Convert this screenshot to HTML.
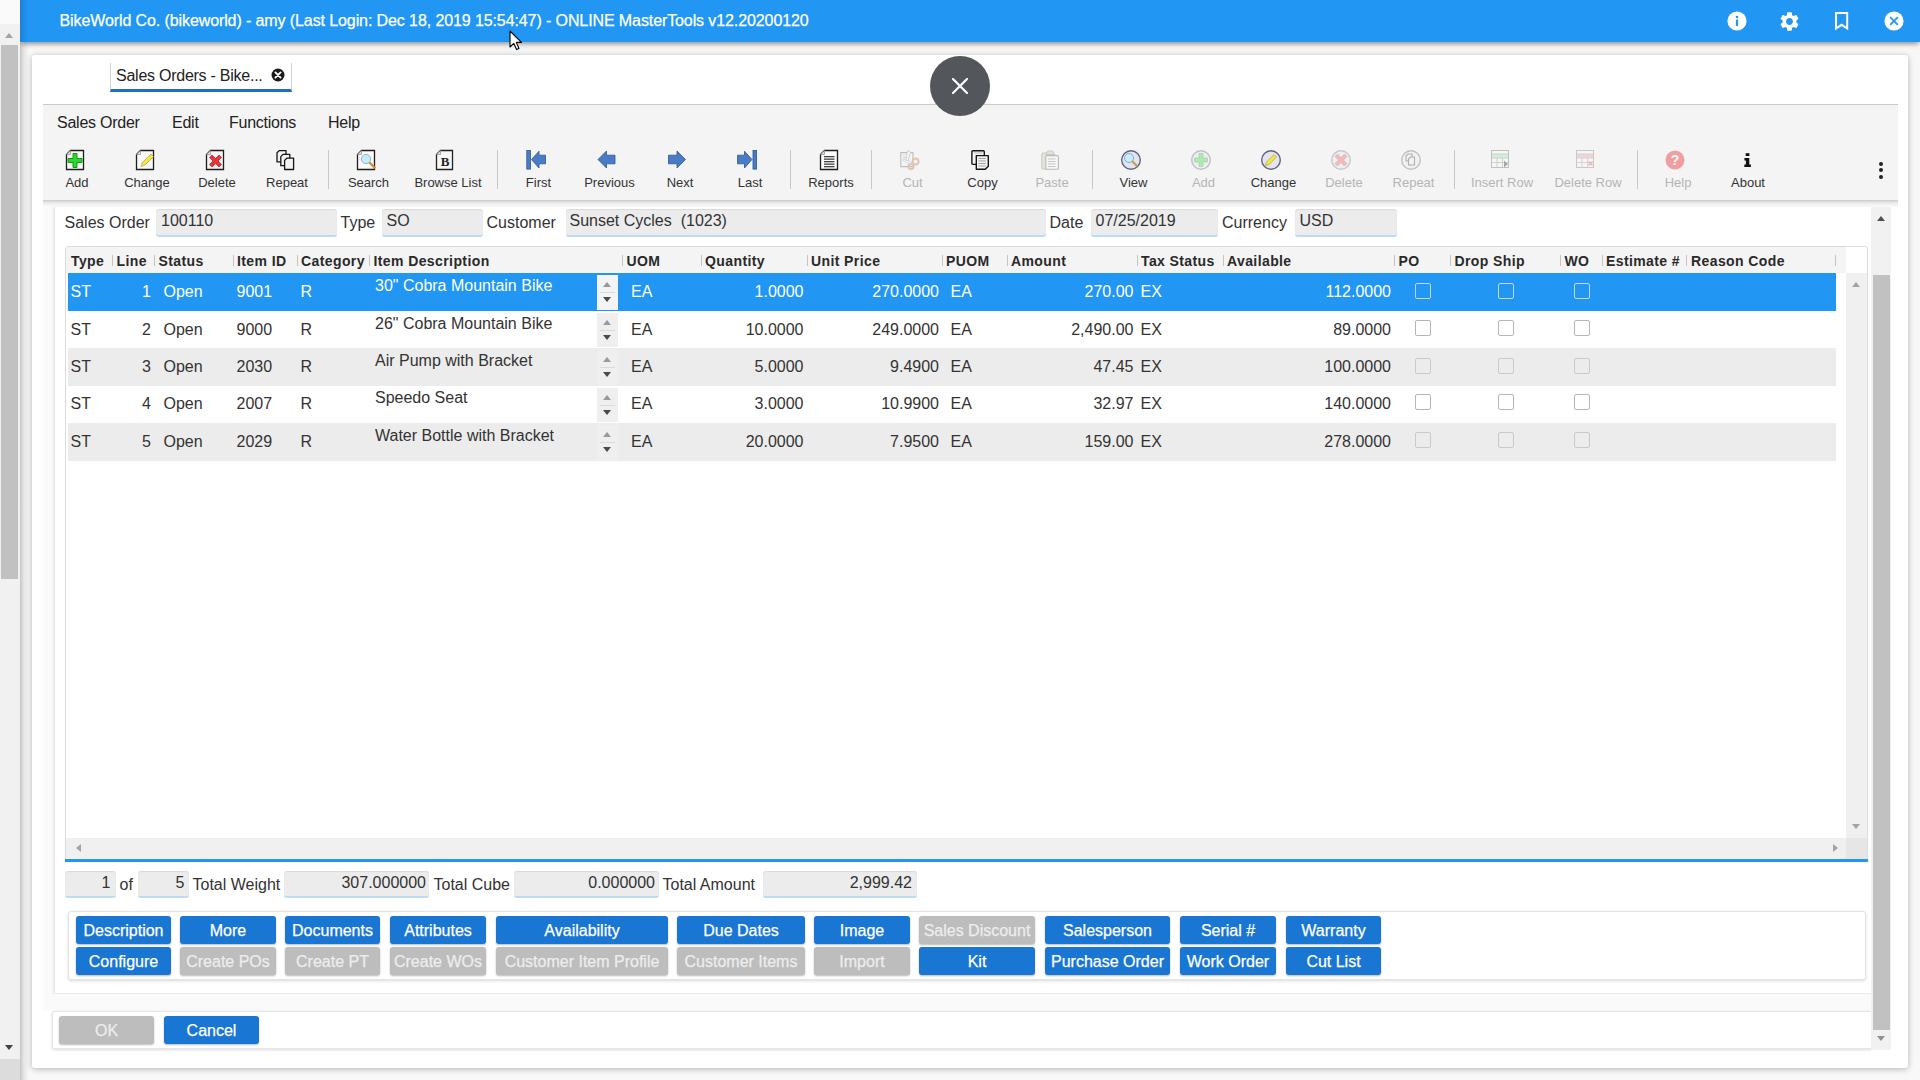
<!DOCTYPE html>
<html><head><meta charset="utf-8"><style>
*{box-sizing:border-box;margin:0;padding:0}
html,body{width:1920px;height:1080px;overflow:hidden}
body{position:relative;background:#f8f8f8;font-family:"Liberation Sans",sans-serif;color:#333}
.a{position:absolute;white-space:nowrap}
svg{position:absolute;overflow:visible}
#lsb{left:0;top:0;width:20px;height:1059px;background:#f1f1f1;z-index:4}
#lsbtop{left:0;top:0;width:20px;height:24px;background:#fafafa;z-index:4}
#lsbcorner{left:0;top:1059px;width:20px;height:21px;background:#dcdcdc;z-index:4}
#lthumb{left:1px;top:45px;width:17px;height:534px;background:#c1c1c1;z-index:5}
.tri-up{width:0;height:0;border-left:4.5px solid transparent;border-right:4.5px solid transparent;border-bottom:5px solid #a3a3a3}
.tri-dn{width:0;height:0;border-left:4.5px solid transparent;border-right:4.5px solid transparent;border-top:5px solid #a3a3a3}
.tri-l{width:0;height:0;border-top:4.5px solid transparent;border-bottom:4.5px solid transparent;border-right:5px solid #a3a3a3}
.tri-r{width:0;height:0;border-top:4.5px solid transparent;border-bottom:4.5px solid transparent;border-left:5px solid #a3a3a3}
#hdr{left:20px;top:0;width:1900px;height:42px;background:linear-gradient(to right,#1d82d6,#2196f3 8px);box-shadow:0 3px 5px -1px rgba(0,0,0,.42);z-index:3}
#title{left:59.5px;top:1px;height:42px;line-height:40px;font-size:16px;letter-spacing:-.1px;color:#fff;z-index:4;-webkit-text-stroke:.25px #fff}
#win{left:32px;top:55px;width:1876px;height:1013px;background:#fff;border-radius:3px;box-shadow:0 1px 6px rgba(0,0,0,.28)}
#tab{left:110px;top:63px;width:182px;height:29px;border:1px solid #cfd3d8;border-top:none;border-bottom:3px solid #1c70c8;background:#fff}
#tabtxt{left:116px;top:63px;height:26px;line-height:26px;font-size:16px;letter-spacing:-.25px;color:#222}
#tbar{left:43px;top:104px;width:1855px;height:96px;background:#f4f4f4;border-top:1px solid #c9c9c9;}
.menu{top:112px;font-size:16px;letter-spacing:-.25px;color:#222;line-height:22px}
.tl{top:175px;width:100px;text-align:center;font-size:13px;color:#333;line-height:16px}
.tl.d{color:#b5b5b5}
.sep{top:150px;width:1px;height:39px;background:#c8c8c8}
#closeov{left:930px;top:56px;width:60px;height:60px;border-radius:50%;background:#53565b;z-index:5}
</style></head><body>
<div class="a" id="lsb"></div><div class="a" id="lsbtop"></div><div class="a" id="lsbcorner"></div>
<div class="a tri-up" style="left:5px;top:33px;z-index:5"></div><div class="a" id="lthumb"></div>
<div class="a tri-dn" style="left:5px;top:1045px;border-top-color:#444;z-index:5"></div>
<div class="a" id="hdr"></div>
<div class="a" id="title">BikeWorld Co. (bikeworld) - amy (Last Login: Dec 18, 2019 15:54:47) - ONLINE MasterTools v12.20200120</div>
<div class="a" style="left:20px;top:42px;width:12px;height:1038px;background:linear-gradient(to right,#c6c6c6,#e4e4e4 30%,#f6f6f6 70%,#fafafa)"></div>
<div class="a" id="win"></div>
<div class="a" id="tab"></div><div class="a" id="tabtxt">Sales Orders - Bike...</div>
<svg style="left:271px;top:68px;z-index:2" width="14" height="14" viewBox="0 0 14 14"><circle cx="7" cy="7" r="6.5" fill="#1a1a1a"/><path d="M4.4 4.4L9.6 9.6M9.6 4.4L4.4 9.6" stroke="#fff" stroke-width="1.9" stroke-linecap="round"/></svg>
<div class="a" id="tbar"></div>
<div class="a menu" style="left:57px">Sales Order</div>
<div class="a menu" style="left:172px">Edit</div>
<div class="a menu" style="left:229px">Functions</div>
<div class="a menu" style="left:328px">Help</div>
<svg style="left:66px;top:150px" width="20" height="20" viewBox="0 0 20 20"><path d="M4.5 .5H17.5V19.5H.5V4.5Z" fill="#fafafa" stroke="#1e1e1e" stroke-width="1.3" stroke-linejoin="miter"/><path d="M.5 4.5H4.5V.5" fill="#ddd" stroke="#999" stroke-width=".8"/><path d="M7 3.5h4v5h5v4h-5v5H7v-5H2v-4h5z" fill="#2fd62f" stroke="#149a14" stroke-width="1"/></svg>
<div class="a tl" style="left:27px">Add</div>
<svg style="left:136px;top:150px" width="20" height="20" viewBox="0 0 20 20"><path d="M4.5 .5H17.5V19.5H.5V4.5Z" fill="#fafafa" stroke="#1e1e1e" stroke-width="1.3" stroke-linejoin="miter"/><path d="M.5 4.5H4.5V.5" fill="#ddd" stroke="#999" stroke-width=".8"/><path d="M5 16.5l1-3.5 9-9 2.5 2.5-9 9z" fill="#f2e64a" stroke="#b9a92a" stroke-width=".8"/><path d="M5 16.5l1-3.5 2.5 2.5z" fill="#d8cf8a"/></svg>
<div class="a tl" style="left:97px">Change</div>
<svg style="left:206px;top:150px" width="20" height="20" viewBox="0 0 20 20"><path d="M4.5 .5H17.5V19.5H.5V4.5Z" fill="#f4f4f4" stroke="#1e1e1e" stroke-width="1.3" stroke-linejoin="miter"/><path d="M.5 4.5H4.5V.5" fill="#ddd" stroke="#999" stroke-width=".8"/><path d="M3.5 5.5l2.5-2.5 3.5 3.5 3.5-3.5 2.5 2.5-3.5 3.5 3.5 3.5-2.5 2.5-3.5-3.5-3.5 3.5-2.5-2.5 3.5-3.5z" transform="translate(0,2)" fill="#e8333a" stroke="#b11d22" stroke-width=".7"/></svg>
<div class="a tl" style="left:167px">Delete</div>
<svg style="left:276px;top:150px" width="20" height="20" viewBox="0 0 20 20"><path d="M3.2 0.6H10V11.9H1V2.8000000000000003Z" fill="#f2f2f2" stroke="#151515" stroke-width="1.3" stroke-linejoin="round"/><path d="M7.0 4.4H13.8V15.700000000000001H4.8V6.6000000000000005Z" fill="#f2f2f2" stroke="#151515" stroke-width="1.3" stroke-linejoin="round"/><path d="M10.8 8.2H17.6V19.5H8.6V10.399999999999999Z" fill="#f2f2f2" stroke="#151515" stroke-width="1.3" stroke-linejoin="round"/></svg>
<div class="a tl" style="left:237px">Repeat</div>
<svg style="left:357px;top:150px" width="20" height="20" viewBox="0 0 20 20"><path d="M4.5 .5H17.5V19.5H.5V4.5Z" fill="#fafafa" stroke="#1e1e1e" stroke-width="1.3" stroke-linejoin="miter"/><path d="M.5 4.5H4.5V.5" fill="#ddd" stroke="#999" stroke-width=".8"/><path d="M12 12l5.5 5.5" stroke="#d98b25" stroke-width="2.4" stroke-linecap="round"/><circle cx="9" cy="9" r="4.6" fill="#c9ecfb" stroke="#8ab7cc" stroke-width="1"/></svg>
<div class="a tl" style="left:318.5px">Search</div>
<svg style="left:436px;top:150px" width="20" height="20" viewBox="0 0 20 20"><path d="M4.5 .5H16.5V19.5H.5V4.5Z" fill="#f7f7f7" stroke="#222" stroke-width="1.3"/><path d="M.5 4.5H4.5V.5" fill="#ddd" stroke="#999" stroke-width=".8"/><text x="9" y="15.5" font-family="Liberation Serif" font-weight="bold" font-size="13" text-anchor="middle" fill="#222">B</text></svg>
<div class="a tl" style="left:398px">Browse List</div>
<svg style="left:526px;top:150px" width="20" height="20" viewBox="0 0 20 20"><rect x=".8" y=".5" width="3.6" height="18.6" fill="#4a7cc6" stroke="#2b5597" stroke-width=".8"/><path d="M5.5 9.5L13 1.2V5.2H19.5V13.8H13V18z" fill="#4a7cc6" stroke="#2b5597" stroke-width=".8"/></svg>
<div class="a tl" style="left:488.5px">First</div>
<svg style="left:597px;top:150px" width="20" height="20" viewBox="0 0 20 20"><path d="M1 9.5L9.5 1V5.2H18V13.8H9.5V18z" fill="#4a7cc6" stroke="#2b5597" stroke-width=".8"/></svg>
<div class="a tl" style="left:559.5px">Previous</div>
<svg style="left:667px;top:150px" width="20" height="20" viewBox="0 0 20 20"><path d="M18.5 9.5L10 1V5.2H1.5V13.8H10V18z" fill="#4a7cc6" stroke="#2b5597" stroke-width=".8"/></svg>
<div class="a tl" style="left:630px">Next</div>
<svg style="left:737px;top:150px" width="20" height="20" viewBox="0 0 20 20"><rect x="16" y=".5" width="3.6" height="18.6" fill="#4a7cc6" stroke="#2b5597" stroke-width=".8"/><path d="M15 9.5L7.5 1.2V5.2H.5V13.8H7.5V18z" fill="#4a7cc6" stroke="#2b5597" stroke-width=".8"/></svg>
<div class="a tl" style="left:700px">Last</div>
<svg style="left:820px;top:150px" width="20" height="20" viewBox="0 0 20 20"><path d="M4.5 .5H17.5V19.5H.5V4.5Z" fill="#fafafa" stroke="#1e1e1e" stroke-width="1.3" stroke-linejoin="miter"/><path d="M.5 4.5H4.5V.5" fill="#ddd" stroke="#999" stroke-width=".8"/><rect x="4" y="6" width="10.5" height="1.3" fill="#444"/><rect x="4" y="8.5" width="10.5" height="1.3" fill="#444"/><rect x="4" y="11" width="10.5" height="1.3" fill="#444"/><rect x="4" y="13.5" width="10.5" height="1.3" fill="#444"/><rect x="4" y="16" width="10.5" height="1.3" fill="#444"/></svg>
<div class="a tl" style="left:781px">Reports</div>
<svg style="left:900px;top:150px" width="20" height="20" viewBox="0 0 20 20"><g opacity=".5"><path d="M.8 2.6H13V16.6H.8Z" fill="#f4f4f4" stroke="#8a8a8a" stroke-width="1.1"/><path d="M3 5l2.5 0M3 7.5h3" stroke="#aaa" stroke-width=".8"/><path d="M7.5 0.8L10.5 2 8 11 6 10Z" fill="#fff" stroke="#999" stroke-width=".8"/><path d="M3 9l10 4-1 2-9-4.5z" fill="#fff" stroke="#aaa" stroke-width=".7"/><circle cx="15.5" cy="11.5" r="3" fill="none" stroke="#c99a7a" stroke-width="2"/><circle cx="11" cy="16.5" r="2.6" fill="none" stroke="#c99a7a" stroke-width="2"/></g></svg>
<div class="a tl d" style="left:862.5px">Cut</div>
<svg style="left:971px;top:150px" width="20" height="20" viewBox="0 0 20 20"><rect x=".9" y=".8" width="12.4" height="13.6" rx="1" fill="#f6f6f6" stroke="#141414" stroke-width="1.4"/><path d="M3 3h8.5" stroke="#aaa" stroke-width=".8"/><path d="M5.3 5.6H17.3V16.2L14.2 19.2H5.3Z" fill="#f6f6f6" stroke="#141414" stroke-width="1.4" stroke-linejoin="round"/><rect x="7.3" y="8" width="7.5" height=".9" fill="#9a9a9a"/><rect x="7.3" y="10.5" width="7.5" height=".9" fill="#9a9a9a"/><rect x="7.3" y="13" width="7.5" height=".9" fill="#9a9a9a"/><rect x="7.3" y="15.5" width="7.5" height=".9" fill="#9a9a9a"/></svg>
<div class="a tl" style="left:932.5px">Copy</div>
<svg style="left:1041px;top:150px" width="20" height="20" viewBox="0 0 20 20"><g opacity=".45"><rect x=".8" y="3" width="12.5" height="16" rx="1.2" fill="#d6cfc2" stroke="#9a9080" stroke-width="1"/><path d="M5 4.5L6.5 1H11.5L13.5 4.5Z" fill="#c8c8c8" stroke="#888" stroke-width=".8"/><rect x="4.8" y="5.6" width="12.6" height="13.6" rx="1" fill="#fafafa" stroke="#777" stroke-width="1.1"/><rect x="7" y="8.5" width="7.5" height=".9" fill="#888"/><rect x="7" y="11" width="7.5" height=".9" fill="#888"/><rect x="7" y="13.5" width="7.5" height=".9" fill="#888"/><rect x="7" y="16" width="7.5" height=".9" fill="#888"/></g></svg>
<div class="a tl d" style="left:1002px">Paste</div>
<svg style="left:1121px;top:150px" width="20" height="20" viewBox="0 0 20 20"><g opacity="1"><circle cx="10" cy="10" r="9.3" fill="#e4e4f0" stroke="#62647e" stroke-width="1.4"/><path d="M10.5 10.5l5 5" stroke="#c8a04a" stroke-width="2.3" stroke-linecap="round"/><circle cx="8" cy="8" r="4.5" fill="#c9ecfb" stroke="#7fb0cc" stroke-width="1"/></g></svg>
<div class="a tl" style="left:1083.5px">View</div>
<svg style="left:1191px;top:150px" width="20" height="20" viewBox="0 0 20 20"><g opacity="0.35"><circle cx="10" cy="10" r="9.3" fill="#e4e4f0" stroke="#62647e" stroke-width="1.4"/><path d="M8 3.5h4v4.5h4.5v4H12v4.5H8V12H3.5V8H8z" fill="#33d433" stroke="#1a9a1a" stroke-width=".8"/></g></svg>
<div class="a tl d" style="left:1153.5px">Add</div>
<svg style="left:1261px;top:150px" width="20" height="20" viewBox="0 0 20 20"><g opacity="1"><circle cx="10" cy="10" r="9.3" fill="#e4e4f0" stroke="#62647e" stroke-width="1.4"/><path d="M4.5 15.5l1-3.5 7.5-7.5 2.5 2.5-7.5 7.5z" fill="#f2e64a" stroke="#b9a92a" stroke-width=".8"/></g></svg>
<div class="a tl" style="left:1223.5px">Change</div>
<svg style="left:1331px;top:150px" width="20" height="20" viewBox="0 0 20 20"><g opacity="0.3"><circle cx="10" cy="10" r="9.3" fill="#e4e4f0" stroke="#62647e" stroke-width="1.4"/><path d="M4 6.5l2.5-2.5 3.5 3.5 3.5-3.5 2.5 2.5-3.5 3.5 3.5 3.5-2.5 2.5-3.5-3.5-3.5 3.5-2.5-2.5 3.5-3.5z" fill="#e8333a" stroke="#b11d22" stroke-width=".7"/></g></svg>
<div class="a tl d" style="left:1294px">Delete</div>
<svg style="left:1401px;top:150px" width="20" height="20" viewBox="0 0 20 20"><g opacity="0.35"><circle cx="10" cy="10" r="9.3" fill="#eee" stroke="#666" stroke-width="1.4"/><path d="M7.0 4.0H11.0V11.0H5.0V6.0Z" fill="#efefef" stroke="#333" stroke-width="1.1"/><path d="M9.5 7.0H13.5V15.0H7.5V9.0Z" fill="#efefef" stroke="#333" stroke-width="1.1"/></g></svg>
<div class="a tl d" style="left:1363.5px">Repeat</div>
<svg style="left:1491px;top:150px" width="20" height="20" viewBox="0 0 20 20"><g opacity=".4"><rect x=".5" y=".5" width="17" height="17" fill="#f8f8f8" stroke="#777" stroke-width="1"/><rect x="1" y="4" width="16" height="4" fill="#a6e8a6"/><path d="M.5 4h17M.5 8h17M.5 12.5h17M6 8v9.5M11.5 8v9.5" stroke="#888" stroke-width=".8"/><path d="M13 10.5l4 3.5-4 3.5z" fill="#333"/></g></svg>
<div class="a tl d" style="left:1452px">Insert Row</div>
<svg style="left:1576px;top:150px" width="20" height="20" viewBox="0 0 20 20"><g opacity=".35"><rect x=".5" y=".5" width="17" height="17" fill="#f8f8f8" stroke="#777" stroke-width="1"/><rect x="1" y="4" width="16" height="4" fill="#f29a9a"/><path d="M.5 4h17M.5 8h17M.5 12.5h17M6 8v9.5M11.5 8v9.5" stroke="#888" stroke-width=".8"/><path d="M12.5 11.5l4 4M16.5 11.5l-4 4" stroke="#e33" stroke-width="1.3"/></g></svg>
<div class="a tl d" style="left:1538px">Delete Row</div>
<svg style="left:1665px;top:150px" width="20" height="20" viewBox="0 0 20 20"><g opacity=".45"><circle cx="10" cy="10" r="9.5" fill="#ea3a3a"/><text x="10" y="15" font-family="Liberation Sans" font-weight="bold" font-size="14" text-anchor="middle" fill="#fff">?</text></g></svg>
<div class="a tl d" style="left:1628px">Help</div>
<svg style="left:1737px;top:150px" width="20" height="20" viewBox="0 0 20 20"><rect x="8.7" y="3.2" width="3.7" height="2.8" fill="#111"/><path d="M7.4 8.1H12.3V14.4H13.9V16.9H7.3V14.4H8.9V10.4H7.4Z" fill="#111"/></svg>
<div class="a tl" style="left:1698px">About</div>
<div class="a sep" style="left:328px"></div>
<div class="a sep" style="left:497px"></div>
<div class="a sep" style="left:790px"></div>
<div class="a sep" style="left:871px"></div>
<div class="a sep" style="left:1092px"></div>
<div class="a sep" style="left:1454px"></div>
<div class="a sep" style="left:1637px"></div>
<div class="a" style="left:1879px;top:161.5px;width:4px;height:4px;border-radius:50%;background:#222"></div>
<div class="a" style="left:1879px;top:168px;width:4px;height:4px;border-radius:50%;background:#222"></div>
<div class="a" style="left:1879px;top:174.5px;width:4px;height:4px;border-radius:50%;background:#222"></div>
<div class="a" style="left:43px;top:200px;width:1855px;height:7px;background:linear-gradient(#c9c9c9,#e6e6e6 35%,#f6f6f6 75%,#fafafa)"></div>
<div class="a" style="left:43px;top:207px;width:11px;height:787px;background:#fafafa"></div>
<div class="a" style="left:54px;top:207px;width:1818px;height:787px;background:#fff;border:1px solid #e8e8e8;border-top:none;box-shadow:0 1px 3px rgba(0,0,0,.12)"></div>
<div class="a" style="left:43px;top:994px;width:1829px;height:17px;background:#fafafa"></div>
<div class="a" style="left:52px;top:1011px;width:1820px;height:38px;background:#fff;border:1px solid #e6e6e6;border-radius:2px;box-shadow:0 1px 3px rgba(0,0,0,.15)"></div>
<div class="a" style="left:1871px;top:207px;width:20px;height:843px;background:#f1f1f1"></div>
<div class="a" style="left:1873px;top:275px;width:17px;height:755px;background:#c1c1c1"></div>
<div class="a tri-up" style="left:1877px;top:216px;border-bottom-color:#505050"></div>
<div class="a tri-dn" style="left:1877px;top:1036px;border-top-color:#909090"></div>
<div class="a" style="top:212.76px;font-size:16px;line-height:20px;color:#333;left:64.50px;">Sales Order</div>
<div class="a" style="left:156px;top:209px;width:181px;height:27.5px;background:#ececec;border-radius:3px;border-bottom:2.5px solid #bedbf3;box-shadow:inset 0 1px 1px rgba(0,0,0,.08)"></div>
<div class="a" style="top:211.26px;font-size:16px;line-height:20px;color:#333;left:161.00px;">100110</div>
<div class="a" style="top:212.76px;font-size:16px;line-height:20px;color:#333;left:340.50px;">Type</div>
<div class="a" style="left:382px;top:209px;width:101px;height:27.5px;background:#ececec;border-radius:3px;border-bottom:2.5px solid #bedbf3;box-shadow:inset 0 1px 1px rgba(0,0,0,.08)"></div>
<div class="a" style="top:211.26px;font-size:16px;line-height:20px;color:#333;left:386.50px;">SO</div>
<div class="a" style="top:212.76px;font-size:16px;line-height:20px;color:#333;left:486.50px;">Customer</div>
<div class="a" style="left:566px;top:209px;width:480px;height:27.5px;background:#ececec;border-radius:3px;border-bottom:2.5px solid #bedbf3;box-shadow:inset 0 1px 1px rgba(0,0,0,.08)"></div>
<div class="a" style="top:211.26px;font-size:16px;line-height:20px;color:#333;left:569.50px;">Sunset Cycles&nbsp; (1023)</div>
<div class="a" style="top:212.76px;font-size:16px;line-height:20px;color:#333;left:1049.50px;">Date</div>
<div class="a" style="left:1091px;top:209px;width:127px;height:27.5px;background:#ececec;border-radius:3px;border-bottom:2.5px solid #bedbf3;box-shadow:inset 0 1px 1px rgba(0,0,0,.08)"></div>
<div class="a" style="top:211.26px;font-size:16px;line-height:20px;color:#333;left:1095.50px;">07/25/2019</div>
<div class="a" style="top:212.76px;font-size:16px;line-height:20px;color:#333;left:1222.00px;">Currency</div>
<div class="a" style="left:1295px;top:209px;width:102px;height:27.5px;background:#ececec;border-radius:3px;border-bottom:2.5px solid #bedbf3;box-shadow:inset 0 1px 1px rgba(0,0,0,.08)"></div>
<div class="a" style="top:211.26px;font-size:16px;line-height:20px;color:#333;left:1299.50px;">USD</div>
<div class="a" style="left:65px;top:246px;width:1803px;height:616px;border:1px solid #dcdcdc;border-radius:3px;background:#fff"></div>
<div class="a" style="left:66px;top:247px;width:1780px;height:26px;background:#f4f4f4"></div>
<div class="a" style="left:112px;top:255px;width:1px;height:11px;background:#c4c4c4"></div>
<div class="a" style="left:154px;top:255px;width:1px;height:11px;background:#c4c4c4"></div>
<div class="a" style="left:233px;top:255px;width:1px;height:11px;background:#c4c4c4"></div>
<div class="a" style="left:297px;top:255px;width:1px;height:11px;background:#c4c4c4"></div>
<div class="a" style="left:369px;top:255px;width:1px;height:11px;background:#c4c4c4"></div>
<div class="a" style="left:622px;top:255px;width:1px;height:11px;background:#c4c4c4"></div>
<div class="a" style="left:701px;top:255px;width:1px;height:11px;background:#c4c4c4"></div>
<div class="a" style="left:807px;top:255px;width:1px;height:11px;background:#c4c4c4"></div>
<div class="a" style="left:942px;top:255px;width:1px;height:11px;background:#c4c4c4"></div>
<div class="a" style="left:1007px;top:255px;width:1px;height:11px;background:#c4c4c4"></div>
<div class="a" style="left:1137px;top:255px;width:1px;height:11px;background:#c4c4c4"></div>
<div class="a" style="left:1223px;top:255px;width:1px;height:11px;background:#c4c4c4"></div>
<div class="a" style="left:1394px;top:255px;width:1px;height:11px;background:#c4c4c4"></div>
<div class="a" style="left:1450px;top:255px;width:1px;height:11px;background:#c4c4c4"></div>
<div class="a" style="left:1560px;top:255px;width:1px;height:11px;background:#c4c4c4"></div>
<div class="a" style="left:1602px;top:255px;width:1px;height:11px;background:#c4c4c4"></div>
<div class="a" style="left:1686px;top:255px;width:1px;height:11px;background:#c4c4c4"></div>
<div class="a" style="left:1835px;top:255px;width:1px;height:11px;background:#c4c4c4"></div>
<div class="a" style="top:251.65px;font-size:14px;line-height:18px;color:#2a2a2a;font-weight:bold;letter-spacing:0.4px;left:71.00px;">Type</div>
<div class="a" style="top:251.65px;font-size:14px;line-height:18px;color:#2a2a2a;font-weight:bold;letter-spacing:0.4px;left:116.50px;">Line</div>
<div class="a" style="top:251.65px;font-size:14px;line-height:18px;color:#2a2a2a;font-weight:bold;letter-spacing:0.4px;left:158.50px;">Status</div>
<div class="a" style="top:251.65px;font-size:14px;line-height:18px;color:#2a2a2a;font-weight:bold;letter-spacing:0.4px;left:237.00px;">Item ID</div>
<div class="a" style="top:251.65px;font-size:14px;line-height:18px;color:#2a2a2a;font-weight:bold;letter-spacing:0.4px;left:301.00px;">Category</div>
<div class="a" style="top:251.65px;font-size:14px;line-height:18px;color:#2a2a2a;font-weight:bold;letter-spacing:0.4px;left:373.50px;">Item Description</div>
<div class="a" style="top:251.65px;font-size:14px;line-height:18px;color:#2a2a2a;font-weight:bold;letter-spacing:0.4px;left:626.50px;">UOM</div>
<div class="a" style="top:251.65px;font-size:14px;line-height:18px;color:#2a2a2a;font-weight:bold;letter-spacing:0.4px;left:705.00px;">Quantity</div>
<div class="a" style="top:251.65px;font-size:14px;line-height:18px;color:#2a2a2a;font-weight:bold;letter-spacing:0.4px;left:811.00px;">Unit Price</div>
<div class="a" style="top:251.65px;font-size:14px;line-height:18px;color:#2a2a2a;font-weight:bold;letter-spacing:0.4px;left:946.00px;">PUOM</div>
<div class="a" style="top:251.65px;font-size:14px;line-height:18px;color:#2a2a2a;font-weight:bold;letter-spacing:0.4px;left:1011.00px;">Amount</div>
<div class="a" style="top:251.65px;font-size:14px;line-height:18px;color:#2a2a2a;font-weight:bold;letter-spacing:0.4px;left:1141.00px;">Tax Status</div>
<div class="a" style="top:251.65px;font-size:14px;line-height:18px;color:#2a2a2a;font-weight:bold;letter-spacing:0.4px;left:1227.00px;">Available</div>
<div class="a" style="top:251.65px;font-size:14px;line-height:18px;color:#2a2a2a;font-weight:bold;letter-spacing:0.4px;left:1398.50px;">PO</div>
<div class="a" style="top:251.65px;font-size:14px;line-height:18px;color:#2a2a2a;font-weight:bold;letter-spacing:0.4px;left:1454.50px;">Drop Ship</div>
<div class="a" style="top:251.65px;font-size:14px;line-height:18px;color:#2a2a2a;font-weight:bold;letter-spacing:0.4px;left:1564.50px;">WO</div>
<div class="a" style="top:251.65px;font-size:14px;line-height:18px;color:#2a2a2a;font-weight:bold;letter-spacing:0.4px;left:1606.00px;">Estimate #</div>
<div class="a" style="top:251.65px;font-size:14px;line-height:18px;color:#2a2a2a;font-weight:bold;letter-spacing:0.4px;left:1691.00px;">Reason Code</div>
<div class="a" style="left:68px;top:273px;width:1768px;height:38px;background:#2196f3"></div>
<div class="a" style="top:282.06px;font-size:16px;line-height:20px;color:#fff;left:70.50px;">ST</div>
<div class="a" style="top:282.06px;font-size:16px;line-height:20px;color:#fff;left:-249.00px;width:400px;text-align:right;">1</div>
<div class="a" style="top:282.06px;font-size:16px;line-height:20px;color:#fff;left:163.50px;">Open</div>
<div class="a" style="top:282.06px;font-size:16px;line-height:20px;color:#fff;left:236.50px;">9001</div>
<div class="a" style="top:282.06px;font-size:16px;line-height:20px;color:#fff;left:300.50px;">R</div>
<div class="a" style="top:276.46px;font-size:16px;line-height:20px;color:#fff;left:375.00px;">30" Cobra Mountain Bike</div>
<div class="a" style="left:597px;top:275px;width:21px;height:35px;background:#f4f4f4"></div>
<div class="a" style="left:600px;top:292px;width:15px;height:1px;background:#dadada"></div>
<div class="a tri-up" style="left:602.5px;top:282px;border-bottom-color:#9a9a9a"></div>
<div class="a tri-dn" style="left:602.5px;top:297px;border-top-color:#4a4a4a"></div>
<div class="a" style="top:282.06px;font-size:16px;line-height:20px;color:#fff;left:631.00px;">EA</div>
<div class="a" style="top:282.06px;font-size:16px;line-height:20px;color:#fff;left:403.50px;width:400px;text-align:right;">1.0000</div>
<div class="a" style="top:282.06px;font-size:16px;line-height:20px;color:#fff;left:539.00px;width:400px;text-align:right;">270.0000</div>
<div class="a" style="top:282.06px;font-size:16px;line-height:20px;color:#fff;left:950.50px;">EA</div>
<div class="a" style="top:282.06px;font-size:16px;line-height:20px;color:#fff;left:733.50px;width:400px;text-align:right;">270.00</div>
<div class="a" style="top:282.06px;font-size:16px;line-height:20px;color:#fff;left:1140.50px;">EX</div>
<div class="a" style="top:282.06px;font-size:16px;line-height:20px;color:#fff;left:991.00px;width:400px;text-align:right;">112.0000</div>
<div class="a" style="left:1415px;top:283px;width:16px;height:16px;border:1.6px solid #bcd9f5;border-radius:2px"></div>
<div class="a" style="left:1498px;top:283px;width:16px;height:16px;border:1.6px solid #bcd9f5;border-radius:2px"></div>
<div class="a" style="left:1574px;top:283px;width:16px;height:16px;border:1.6px solid #bcd9f5;border-radius:2px"></div>
<div class="a" style="left:68px;top:311px;width:1768px;height:37px;background:#fff"></div>
<div class="a" style="top:319.56px;font-size:16px;line-height:20px;color:#333;left:70.50px;">ST</div>
<div class="a" style="top:319.56px;font-size:16px;line-height:20px;color:#333;left:-249.00px;width:400px;text-align:right;">2</div>
<div class="a" style="top:319.56px;font-size:16px;line-height:20px;color:#333;left:163.50px;">Open</div>
<div class="a" style="top:319.56px;font-size:16px;line-height:20px;color:#333;left:236.50px;">9000</div>
<div class="a" style="top:319.56px;font-size:16px;line-height:20px;color:#333;left:300.50px;">R</div>
<div class="a" style="top:313.96px;font-size:16px;line-height:20px;color:#333;left:375.00px;">26" Cobra Mountain Bike</div>
<div class="a" style="left:597px;top:313px;width:21px;height:34px;background:#efefef"></div>
<div class="a" style="left:600px;top:330px;width:15px;height:1px;background:#dadada"></div>
<div class="a tri-up" style="left:602.5px;top:320px;border-bottom-color:#9a9a9a"></div>
<div class="a tri-dn" style="left:602.5px;top:335px;border-top-color:#4a4a4a"></div>
<div class="a" style="top:319.56px;font-size:16px;line-height:20px;color:#333;left:631.00px;">EA</div>
<div class="a" style="top:319.56px;font-size:16px;line-height:20px;color:#333;left:403.50px;width:400px;text-align:right;">10.0000</div>
<div class="a" style="top:319.56px;font-size:16px;line-height:20px;color:#333;left:539.00px;width:400px;text-align:right;">249.0000</div>
<div class="a" style="top:319.56px;font-size:16px;line-height:20px;color:#333;left:950.50px;">EA</div>
<div class="a" style="top:319.56px;font-size:16px;line-height:20px;color:#333;left:733.50px;width:400px;text-align:right;">2,490.00</div>
<div class="a" style="top:319.56px;font-size:16px;line-height:20px;color:#333;left:1140.50px;">EX</div>
<div class="a" style="top:319.56px;font-size:16px;line-height:20px;color:#333;left:991.00px;width:400px;text-align:right;">89.0000</div>
<div class="a" style="left:1415px;top:320px;width:16px;height:16px;border:1.6px solid #b6b6b6;border-radius:2px"></div>
<div class="a" style="left:1498px;top:320px;width:16px;height:16px;border:1.6px solid #b6b6b6;border-radius:2px"></div>
<div class="a" style="left:1574px;top:320px;width:16px;height:16px;border:1.6px solid #b6b6b6;border-radius:2px"></div>
<div class="a" style="left:68px;top:348px;width:1768px;height:38px;background:#ececec"></div>
<div class="a" style="top:356.96px;font-size:16px;line-height:20px;color:#333;left:70.50px;">ST</div>
<div class="a" style="top:356.96px;font-size:16px;line-height:20px;color:#333;left:-249.00px;width:400px;text-align:right;">3</div>
<div class="a" style="top:356.96px;font-size:16px;line-height:20px;color:#333;left:163.50px;">Open</div>
<div class="a" style="top:356.96px;font-size:16px;line-height:20px;color:#333;left:236.50px;">2030</div>
<div class="a" style="top:356.96px;font-size:16px;line-height:20px;color:#333;left:300.50px;">R</div>
<div class="a" style="top:351.36px;font-size:16px;line-height:20px;color:#333;left:375.00px;">Air Pump with Bracket</div>
<div class="a" style="left:597px;top:350px;width:21px;height:35px;background:#efefef"></div>
<div class="a" style="left:600px;top:367px;width:15px;height:1px;background:#dadada"></div>
<div class="a tri-up" style="left:602.5px;top:357px;border-bottom-color:#9a9a9a"></div>
<div class="a tri-dn" style="left:602.5px;top:372px;border-top-color:#4a4a4a"></div>
<div class="a" style="top:356.96px;font-size:16px;line-height:20px;color:#333;left:631.00px;">EA</div>
<div class="a" style="top:356.96px;font-size:16px;line-height:20px;color:#333;left:403.50px;width:400px;text-align:right;">5.0000</div>
<div class="a" style="top:356.96px;font-size:16px;line-height:20px;color:#333;left:539.00px;width:400px;text-align:right;">9.4900</div>
<div class="a" style="top:356.96px;font-size:16px;line-height:20px;color:#333;left:950.50px;">EA</div>
<div class="a" style="top:356.96px;font-size:16px;line-height:20px;color:#333;left:733.50px;width:400px;text-align:right;">47.45</div>
<div class="a" style="top:356.96px;font-size:16px;line-height:20px;color:#333;left:1140.50px;">EX</div>
<div class="a" style="top:356.96px;font-size:16px;line-height:20px;color:#333;left:991.00px;width:400px;text-align:right;">100.0000</div>
<div class="a" style="left:1415px;top:358px;width:16px;height:16px;border:1.6px solid #cacaca;border-radius:2px"></div>
<div class="a" style="left:1498px;top:358px;width:16px;height:16px;border:1.6px solid #cacaca;border-radius:2px"></div>
<div class="a" style="left:1574px;top:358px;width:16px;height:16px;border:1.6px solid #cacaca;border-radius:2px"></div>
<div class="a" style="left:68px;top:386px;width:1768px;height:37px;background:#fff"></div>
<div class="a" style="top:393.96px;font-size:16px;line-height:20px;color:#333;left:70.50px;">ST</div>
<div class="a" style="top:393.96px;font-size:16px;line-height:20px;color:#333;left:-249.00px;width:400px;text-align:right;">4</div>
<div class="a" style="top:393.96px;font-size:16px;line-height:20px;color:#333;left:163.50px;">Open</div>
<div class="a" style="top:393.96px;font-size:16px;line-height:20px;color:#333;left:236.50px;">2007</div>
<div class="a" style="top:393.96px;font-size:16px;line-height:20px;color:#333;left:300.50px;">R</div>
<div class="a" style="top:388.36px;font-size:16px;line-height:20px;color:#333;left:375.00px;">Speedo Seat</div>
<div class="a" style="left:597px;top:388px;width:21px;height:34px;background:#efefef"></div>
<div class="a" style="left:600px;top:405px;width:15px;height:1px;background:#dadada"></div>
<div class="a tri-up" style="left:602.5px;top:395px;border-bottom-color:#9a9a9a"></div>
<div class="a tri-dn" style="left:602.5px;top:410px;border-top-color:#4a4a4a"></div>
<div class="a" style="top:393.96px;font-size:16px;line-height:20px;color:#333;left:631.00px;">EA</div>
<div class="a" style="top:393.96px;font-size:16px;line-height:20px;color:#333;left:403.50px;width:400px;text-align:right;">3.0000</div>
<div class="a" style="top:393.96px;font-size:16px;line-height:20px;color:#333;left:539.00px;width:400px;text-align:right;">10.9900</div>
<div class="a" style="top:393.96px;font-size:16px;line-height:20px;color:#333;left:950.50px;">EA</div>
<div class="a" style="top:393.96px;font-size:16px;line-height:20px;color:#333;left:733.50px;width:400px;text-align:right;">32.97</div>
<div class="a" style="top:393.96px;font-size:16px;line-height:20px;color:#333;left:1140.50px;">EX</div>
<div class="a" style="top:393.96px;font-size:16px;line-height:20px;color:#333;left:991.00px;width:400px;text-align:right;">140.0000</div>
<div class="a" style="left:1415px;top:394px;width:16px;height:16px;border:1.6px solid #b6b6b6;border-radius:2px"></div>
<div class="a" style="left:1498px;top:394px;width:16px;height:16px;border:1.6px solid #b6b6b6;border-radius:2px"></div>
<div class="a" style="left:1574px;top:394px;width:16px;height:16px;border:1.6px solid #b6b6b6;border-radius:2px"></div>
<div class="a" style="left:68px;top:423px;width:1768px;height:38px;background:#ececec"></div>
<div class="a" style="top:431.96px;font-size:16px;line-height:20px;color:#333;left:70.50px;">ST</div>
<div class="a" style="top:431.96px;font-size:16px;line-height:20px;color:#333;left:-249.00px;width:400px;text-align:right;">5</div>
<div class="a" style="top:431.96px;font-size:16px;line-height:20px;color:#333;left:163.50px;">Open</div>
<div class="a" style="top:431.96px;font-size:16px;line-height:20px;color:#333;left:236.50px;">2029</div>
<div class="a" style="top:431.96px;font-size:16px;line-height:20px;color:#333;left:300.50px;">R</div>
<div class="a" style="top:426.36px;font-size:16px;line-height:20px;color:#333;left:375.00px;">Water Bottle with Bracket</div>
<div class="a" style="left:597px;top:425px;width:21px;height:35px;background:#efefef"></div>
<div class="a" style="left:600px;top:442px;width:15px;height:1px;background:#dadada"></div>
<div class="a tri-up" style="left:602.5px;top:432px;border-bottom-color:#9a9a9a"></div>
<div class="a tri-dn" style="left:602.5px;top:447px;border-top-color:#4a4a4a"></div>
<div class="a" style="top:431.96px;font-size:16px;line-height:20px;color:#333;left:631.00px;">EA</div>
<div class="a" style="top:431.96px;font-size:16px;line-height:20px;color:#333;left:403.50px;width:400px;text-align:right;">20.0000</div>
<div class="a" style="top:431.96px;font-size:16px;line-height:20px;color:#333;left:539.00px;width:400px;text-align:right;">7.9500</div>
<div class="a" style="top:431.96px;font-size:16px;line-height:20px;color:#333;left:950.50px;">EA</div>
<div class="a" style="top:431.96px;font-size:16px;line-height:20px;color:#333;left:733.50px;width:400px;text-align:right;">159.00</div>
<div class="a" style="top:431.96px;font-size:16px;line-height:20px;color:#333;left:1140.50px;">EX</div>
<div class="a" style="top:431.96px;font-size:16px;line-height:20px;color:#333;left:991.00px;width:400px;text-align:right;">278.0000</div>
<div class="a" style="left:1415px;top:432px;width:16px;height:16px;border:1.6px solid #cacaca;border-radius:2px"></div>
<div class="a" style="left:1498px;top:432px;width:16px;height:16px;border:1.6px solid #cacaca;border-radius:2px"></div>
<div class="a" style="left:1574px;top:432px;width:16px;height:16px;border:1.6px solid #cacaca;border-radius:2px"></div>
<div class="a" style="left:1846px;top:273px;width:21px;height:565px;background:#f0f0f0"></div>
<div class="a tri-up" style="left:1852px;top:282px"></div>
<div class="a tri-dn" style="left:1852px;top:824px"></div>
<div class="a" style="left:66px;top:838px;width:1780px;height:21px;background:#f0f0f0"></div>
<div class="a" style="left:1846px;top:838px;width:21px;height:21px;background:#e6e6e6"></div>
<div class="a tri-l" style="left:76px;top:844px"></div>
<div class="a tri-r" style="left:1833px;top:844px"></div>
<div class="a" style="left:65px;top:859px;width:1803px;height:3px;background:#2196f3"></div>
<div class="a" style="left:65px;top:871px;width:51px;height:27px;background:#ececec;border-radius:3px;border-bottom:2.5px solid #bedbf3;box-shadow:inset 0 1px 1px rgba(0,0,0,.08)"></div>
<div class="a" style="top:873.36px;font-size:16px;line-height:20px;color:#333;left:-289.50px;width:400px;text-align:right;">1</div>
<div class="a" style="top:875.46px;font-size:16px;line-height:20px;color:#333;left:119.50px;">of</div>
<div class="a" style="left:138px;top:871px;width:50.5px;height:27px;background:#ececec;border-radius:3px;border-bottom:2.5px solid #bedbf3;box-shadow:inset 0 1px 1px rgba(0,0,0,.08)"></div>
<div class="a" style="top:873.36px;font-size:16px;line-height:20px;color:#333;left:-215.50px;width:400px;text-align:right;">5</div>
<div class="a" style="top:875.46px;font-size:16px;line-height:20px;color:#333;left:192.50px;">Total Weight</div>
<div class="a" style="left:284px;top:871px;width:145px;height:27px;background:#ececec;border-radius:3px;border-bottom:2.5px solid #bedbf3;box-shadow:inset 0 1px 1px rgba(0,0,0,.08)"></div>
<div class="a" style="top:873.36px;font-size:16px;line-height:20px;color:#333;left:26.00px;width:400px;text-align:right;">307.000000</div>
<div class="a" style="top:875.46px;font-size:16px;line-height:20px;color:#333;left:433.50px;">Total Cube</div>
<div class="a" style="left:513.5px;top:871px;width:145.0px;height:27px;background:#ececec;border-radius:3px;border-bottom:2.5px solid #bedbf3;box-shadow:inset 0 1px 1px rgba(0,0,0,.08)"></div>
<div class="a" style="top:873.36px;font-size:16px;line-height:20px;color:#333;left:255.00px;width:400px;text-align:right;">0.000000</div>
<div class="a" style="top:875.46px;font-size:16px;line-height:20px;color:#333;left:662.50px;">Total Amount</div>
<div class="a" style="left:762.5px;top:871px;width:154.0px;height:27px;background:#ececec;border-radius:3px;border-bottom:2.5px solid #bedbf3;box-shadow:inset 0 1px 1px rgba(0,0,0,.08)"></div>
<div class="a" style="top:873.36px;font-size:16px;line-height:20px;color:#333;left:512.00px;width:400px;text-align:right;">2,999.42</div>
<div class="a" style="left:68px;top:911px;width:1798px;height:69px;background:#fff;border:1px solid #e4e4e4;border-radius:3px;box-shadow:0 1px 3px rgba(0,0,0,.15)"></div>
<div class="a" style="left:76px;top:916px;width:95px;height:28px;background:#1976d2;border-radius:3px;box-shadow:0 1px 2px rgba(0,0,0,.28)"></div>
<div class="a" style="top:920.76px;font-size:16px;line-height:20px;color:#fff;left:-76.50px;width:400px;text-align:center;-webkit-text-stroke:.25px #fff">Description</div>
<div class="a" style="left:76px;top:947px;width:95px;height:28px;background:#1976d2;border-radius:3px;box-shadow:0 1px 2px rgba(0,0,0,.28)"></div>
<div class="a" style="top:951.76px;font-size:16px;line-height:20px;color:#fff;left:-76.50px;width:400px;text-align:center;-webkit-text-stroke:.25px #fff">Configure</div>
<div class="a" style="left:180px;top:916px;width:96px;height:28px;background:#1976d2;border-radius:3px;box-shadow:0 1px 2px rgba(0,0,0,.28)"></div>
<div class="a" style="top:920.76px;font-size:16px;line-height:20px;color:#fff;left:28.00px;width:400px;text-align:center;-webkit-text-stroke:.25px #fff">More</div>
<div class="a" style="left:180px;top:947px;width:96px;height:28px;background:#bdbdbd;border-radius:3px;box-shadow:0 1px 2px rgba(0,0,0,.28)"></div>
<div class="a" style="top:951.76px;font-size:16px;line-height:20px;color:#ededed;left:28.00px;width:400px;text-align:center;-webkit-text-stroke:.25px #ededed">Create POs</div>
<div class="a" style="left:285px;top:916px;width:95px;height:28px;background:#1976d2;border-radius:3px;box-shadow:0 1px 2px rgba(0,0,0,.28)"></div>
<div class="a" style="top:920.76px;font-size:16px;line-height:20px;color:#fff;left:132.50px;width:400px;text-align:center;-webkit-text-stroke:.25px #fff">Documents</div>
<div class="a" style="left:285px;top:947px;width:95px;height:28px;background:#bdbdbd;border-radius:3px;box-shadow:0 1px 2px rgba(0,0,0,.28)"></div>
<div class="a" style="top:951.76px;font-size:16px;line-height:20px;color:#ededed;left:132.50px;width:400px;text-align:center;-webkit-text-stroke:.25px #ededed">Create PT</div>
<div class="a" style="left:390px;top:916px;width:96px;height:28px;background:#1976d2;border-radius:3px;box-shadow:0 1px 2px rgba(0,0,0,.28)"></div>
<div class="a" style="top:920.76px;font-size:16px;line-height:20px;color:#fff;left:238.00px;width:400px;text-align:center;-webkit-text-stroke:.25px #fff">Attributes</div>
<div class="a" style="left:390px;top:947px;width:96px;height:28px;background:#bdbdbd;border-radius:3px;box-shadow:0 1px 2px rgba(0,0,0,.28)"></div>
<div class="a" style="top:951.76px;font-size:16px;line-height:20px;color:#ededed;left:238.00px;width:400px;text-align:center;-webkit-text-stroke:.25px #ededed">Create WOs</div>
<div class="a" style="left:496px;top:916px;width:172px;height:28px;background:#1976d2;border-radius:3px;box-shadow:0 1px 2px rgba(0,0,0,.28)"></div>
<div class="a" style="top:920.76px;font-size:16px;line-height:20px;color:#fff;left:382.00px;width:400px;text-align:center;-webkit-text-stroke:.25px #fff">Availability</div>
<div class="a" style="left:496px;top:947px;width:172px;height:28px;background:#bdbdbd;border-radius:3px;box-shadow:0 1px 2px rgba(0,0,0,.28)"></div>
<div class="a" style="top:951.76px;font-size:16px;line-height:20px;color:#ededed;left:382.00px;width:400px;text-align:center;-webkit-text-stroke:.25px #ededed">Customer Item Profile</div>
<div class="a" style="left:677px;top:916px;width:128px;height:28px;background:#1976d2;border-radius:3px;box-shadow:0 1px 2px rgba(0,0,0,.28)"></div>
<div class="a" style="top:920.76px;font-size:16px;line-height:20px;color:#fff;left:541.00px;width:400px;text-align:center;-webkit-text-stroke:.25px #fff">Due Dates</div>
<div class="a" style="left:677px;top:947px;width:128px;height:28px;background:#bdbdbd;border-radius:3px;box-shadow:0 1px 2px rgba(0,0,0,.28)"></div>
<div class="a" style="top:951.76px;font-size:16px;line-height:20px;color:#ededed;left:541.00px;width:400px;text-align:center;-webkit-text-stroke:.25px #ededed">Customer Items</div>
<div class="a" style="left:814px;top:916px;width:96px;height:28px;background:#1976d2;border-radius:3px;box-shadow:0 1px 2px rgba(0,0,0,.28)"></div>
<div class="a" style="top:920.76px;font-size:16px;line-height:20px;color:#fff;left:662.00px;width:400px;text-align:center;-webkit-text-stroke:.25px #fff">Image</div>
<div class="a" style="left:814px;top:947px;width:96px;height:28px;background:#bdbdbd;border-radius:3px;box-shadow:0 1px 2px rgba(0,0,0,.28)"></div>
<div class="a" style="top:951.76px;font-size:16px;line-height:20px;color:#ededed;left:662.00px;width:400px;text-align:center;-webkit-text-stroke:.25px #ededed">Import</div>
<div class="a" style="left:919px;top:916px;width:116px;height:28px;background:#bdbdbd;border-radius:3px;box-shadow:0 1px 2px rgba(0,0,0,.28)"></div>
<div class="a" style="top:920.76px;font-size:16px;line-height:20px;color:#ededed;left:777.00px;width:400px;text-align:center;-webkit-text-stroke:.25px #ededed">Sales Discount</div>
<div class="a" style="left:919px;top:947px;width:116px;height:28px;background:#1976d2;border-radius:3px;box-shadow:0 1px 2px rgba(0,0,0,.28)"></div>
<div class="a" style="top:951.76px;font-size:16px;line-height:20px;color:#fff;left:777.00px;width:400px;text-align:center;-webkit-text-stroke:.25px #fff">Kit</div>
<div class="a" style="left:1045px;top:916px;width:125px;height:28px;background:#1976d2;border-radius:3px;box-shadow:0 1px 2px rgba(0,0,0,.28)"></div>
<div class="a" style="top:920.76px;font-size:16px;line-height:20px;color:#fff;left:907.50px;width:400px;text-align:center;-webkit-text-stroke:.25px #fff">Salesperson</div>
<div class="a" style="left:1045px;top:947px;width:125px;height:28px;background:#1976d2;border-radius:3px;box-shadow:0 1px 2px rgba(0,0,0,.28)"></div>
<div class="a" style="top:951.76px;font-size:16px;line-height:20px;color:#fff;left:907.50px;width:400px;text-align:center;-webkit-text-stroke:.25px #fff">Purchase Order</div>
<div class="a" style="left:1180px;top:916px;width:96px;height:28px;background:#1976d2;border-radius:3px;box-shadow:0 1px 2px rgba(0,0,0,.28)"></div>
<div class="a" style="top:920.76px;font-size:16px;line-height:20px;color:#fff;left:1028.00px;width:400px;text-align:center;-webkit-text-stroke:.25px #fff">Serial #</div>
<div class="a" style="left:1180px;top:947px;width:96px;height:28px;background:#1976d2;border-radius:3px;box-shadow:0 1px 2px rgba(0,0,0,.28)"></div>
<div class="a" style="top:951.76px;font-size:16px;line-height:20px;color:#fff;left:1028.00px;width:400px;text-align:center;-webkit-text-stroke:.25px #fff">Work Order</div>
<div class="a" style="left:1286px;top:916px;width:95px;height:28px;background:#1976d2;border-radius:3px;box-shadow:0 1px 2px rgba(0,0,0,.28)"></div>
<div class="a" style="top:920.76px;font-size:16px;line-height:20px;color:#fff;left:1133.50px;width:400px;text-align:center;-webkit-text-stroke:.25px #fff">Warranty</div>
<div class="a" style="left:1286px;top:947px;width:95px;height:28px;background:#1976d2;border-radius:3px;box-shadow:0 1px 2px rgba(0,0,0,.28)"></div>
<div class="a" style="top:951.76px;font-size:16px;line-height:20px;color:#fff;left:1133.50px;width:400px;text-align:center;-webkit-text-stroke:.25px #fff">Cut List</div>
<div class="a" style="left:59px;top:1016px;width:95px;height:28px;background:#bdbdbd;border-radius:3px;box-shadow:0 1px 2px rgba(0,0,0,.28)"></div>
<div class="a" style="top:1020.76px;font-size:16px;line-height:20px;color:#ededed;left:-93.50px;width:400px;text-align:center;-webkit-text-stroke:.25px #ededed">OK</div>
<div class="a" style="left:164px;top:1016px;width:95px;height:28px;background:#1976d2;border-radius:3px;box-shadow:0 1px 2px rgba(0,0,0,.28)"></div>
<div class="a" style="top:1020.76px;font-size:16px;line-height:20px;color:#fff;left:11.50px;width:400px;text-align:center;-webkit-text-stroke:.25px #fff">Cancel</div>
<svg style="left:1727px;top:11px;z-index:4" width="20" height="20" viewBox="0 0 20 20"><circle cx="10" cy="10" r="9.6" fill="#fff"/><circle cx="10" cy="6" r="1.3" fill="#2196f3"/><rect x="8.9" y="8.5" width="2.2" height="6.5" fill="#2196f3"/></svg>
<svg style="left:1777.5px;top:9.5px;z-index:4" width="23" height="23" viewBox="0 0 24 24"><path fill="#fff" d="M19.14 12.94c.04-.3.06-.61.06-.94 0-.32-.02-.64-.07-.94l2.03-1.58a.49.49 0 0 0 .12-.61l-1.92-3.32a.488.488 0 0 0-.59-.22l-2.39.96c-.5-.38-1.03-.7-1.62-.94l-.36-2.54a.484.484 0 0 0-.48-.41h-3.84c-.24 0-.43.17-.47.41l-.36 2.54c-.59.24-1.13.57-1.62.94l-2.39-.96c-.22-.08-.47 0-.59.22L2.74 8.87c-.12.21-.08.47.12.61l2.03 1.58c-.05.3-.09.63-.09.94s.02.64.07.94l-2.03 1.58a.49.49 0 0 0-.12.61l1.92 3.32c.12.22.37.29.59.22l2.39-.96c.5.38 1.03.7 1.62.94l.36 2.54c.05.24.24.41.48.41h3.84c.24 0 .44-.17.47-.41l.36-2.54c.59-.24 1.13-.56 1.62-.94l2.39.96c.22.08.47 0 .59-.22l1.92-3.32c.12-.22.07-.47-.12-.61l-2.01-1.58zM12 15.6c-1.98 0-3.6-1.62-3.6-3.6s1.62-3.6 3.6-3.6 3.6 1.62 3.6 3.6-1.62 3.6-3.6 3.6z"/></svg>
<svg style="left:1834.5px;top:12px;z-index:4" width="14" height="18" viewBox="0 0 14 18"><path d="M1 1H12.2V16.5L6.6 12.8 1 16.5Z" fill="none" stroke="#fff" stroke-width="2"/></svg>
<svg style="left:1884px;top:11px;z-index:4" width="20" height="20" viewBox="0 0 20 20"><circle cx="10" cy="10" r="9.6" fill="#fff"/><path d="M6.2 6.2L13.8 13.8M13.8 6.2L6.2 13.8" stroke="#2196f3" stroke-width="1.8"/></svg>
<svg style="left:509px;top:30px;z-index:10" width="14" height="22" viewBox="0 0 14 22"><path d="M1 1V17L4.8 13.4L7.6 19.6L10 18.5L7.3 12.4H12.5Z" fill="#fff" stroke="#000" stroke-width="1.1" stroke-linejoin="round"/></svg>
<div class="a" id="closeov"></div>
<svg style="left:952px;top:78px;z-index:6" width="16" height="16" viewBox="0 0 16 16"><path d="M1 1L15 15M15 1L1 15" stroke="#fff" stroke-width="2.2" stroke-linecap="round"/></svg>
</body></html>
